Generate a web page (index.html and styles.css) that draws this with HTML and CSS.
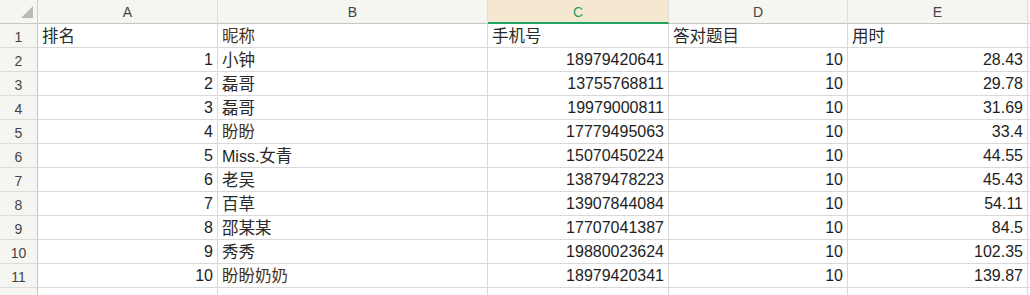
FILE: index.html
```html
<!DOCTYPE html>
<html lang="zh-CN">
<head>
<meta charset="utf-8">
<title>排名</title>
<link rel="stylesheet" href="styles.css">
</head>
<body>
<div class="sheet">
  <div class="corner"><span class="tri"></span></div>
  <div class="colhead">A</div>
  <div class="colhead">B</div>
  <div class="colhead active">C</div>
  <div class="colhead">D</div>
  <div class="colhead">E</div>
  <div class="colhead tail"></div>

  <div class="rowhead">1</div>
  <div class="cell"><span class="cjk">排名</span></div>
  <div class="cell"><span class="cjk warm">昵称</span></div>
  <div class="cell"><span class="cjk">手机号</span></div>
  <div class="cell"><span class="cjk">答对题目</span></div>
  <div class="cell"><span class="cjk">用时</span></div>
  <div class="cell tail"></div>

  <div class="rowhead">2</div>
  <div class="cell num">1</div>
  <div class="cell"><span class="cjk">小钟</span></div>
  <div class="cell num">18979420641</div>
  <div class="cell num">10</div>
  <div class="cell num">28.43</div>
  <div class="cell tail"></div>

  <div class="rowhead">3</div>
  <div class="cell num">2</div>
  <div class="cell"><span class="cjk">磊哥</span></div>
  <div class="cell num">13755768811</div>
  <div class="cell num">10</div>
  <div class="cell num">29.78</div>
  <div class="cell tail"></div>

  <div class="rowhead">4</div>
  <div class="cell num">3</div>
  <div class="cell"><span class="cjk">磊哥</span></div>
  <div class="cell num">19979000811</div>
  <div class="cell num">10</div>
  <div class="cell num">31.69</div>
  <div class="cell tail"></div>

  <div class="rowhead">5</div>
  <div class="cell num">4</div>
  <div class="cell"><span class="cjk warm">盼盼</span></div>
  <div class="cell num">17779495063</div>
  <div class="cell num">10</div>
  <div class="cell num">33.4</div>
  <div class="cell tail"></div>

  <div class="rowhead">6</div>
  <div class="cell num">5</div>
  <div class="cell">Miss.<span class="cjk">女青</span></div>
  <div class="cell num">15070450224</div>
  <div class="cell num">10</div>
  <div class="cell num">44.55</div>
  <div class="cell tail"></div>

  <div class="rowhead">7</div>
  <div class="cell num">6</div>
  <div class="cell"><span class="cjk">老吴</span></div>
  <div class="cell num">13879478223</div>
  <div class="cell num">10</div>
  <div class="cell num">45.43</div>
  <div class="cell tail"></div>

  <div class="rowhead">8</div>
  <div class="cell num">7</div>
  <div class="cell"><span class="cjk">百草</span></div>
  <div class="cell num">13907844084</div>
  <div class="cell num">10</div>
  <div class="cell num">54.11</div>
  <div class="cell tail"></div>

  <div class="rowhead">9</div>
  <div class="cell num">8</div>
  <div class="cell"><span class="cjk">邵某某</span></div>
  <div class="cell num">17707041387</div>
  <div class="cell num">10</div>
  <div class="cell num">84.5</div>
  <div class="cell tail"></div>

  <div class="rowhead">10</div>
  <div class="cell num">9</div>
  <div class="cell"><span class="cjk">秀秀</span></div>
  <div class="cell num">19880023624</div>
  <div class="cell num">10</div>
  <div class="cell num">102.35</div>
  <div class="cell tail"></div>

  <div class="rowhead">11</div>
  <div class="cell num">10</div>
  <div class="cell"><span class="cjk warm">盼盼奶奶</span></div>
  <div class="cell num">18979420341</div>
  <div class="cell num">10</div>
  <div class="cell num">139.87</div>
  <div class="cell tail"></div>

  <div class="rowhead"></div>
  <div class="cell"></div>
  <div class="cell"></div>
  <div class="cell"></div>
  <div class="cell"></div>
  <div class="cell"></div>
  <div class="cell tail"></div>
</div>
</body>
</html>
```

FILE: styles.css
```css
html, body {
  margin: 0;
  padding: 0;
  background: #ffffff;
  overflow: hidden;
}

.sheet {
  display: grid;
  grid-template-columns: 38px 180px 270px 181px 179px 180px 1fr;
  grid-auto-rows: 24px;
  width: 1030px;
  height: 295px;
  overflow: hidden;
  font-family: "Liberation Sans", Arial, sans-serif;
  color: #1e1e1e;
}

.sheet > div {
  box-sizing: border-box;
  border-right: 1px solid #d9d9d9;
  border-bottom: 1px solid #d9d9d9;
  overflow: hidden;
  white-space: nowrap;
}

.corner {
  background: #f5f5f2;
  display: flex;
  align-items: flex-end;
  justify-content: flex-end;
  padding: 0 4px 5px 0;
  border-right-color: #cfcfcc !important;
  border-bottom-color: #c6c6c3 !important;
}

.tri {
  display: block;
  width: 12px;
  height: 12px;
  background: #b9b9b6;
  clip-path: polygon(100% 0, 100% 100%, 0 100%);
}

.colhead {
  background: #f5f5f2;
  display: flex;
  align-items: center;
  justify-content: center;
  padding-top: 1px;
  font-size: 14px;
  color: #444444;
  border-right-color: #dcdcd8 !important;
  border-bottom-color: #c6c6c3 !important;
}

.colhead.active {
  background: #f4e8d0;
  color: #21a366;
  border-bottom: 2px solid #21a366 !important;
  padding-top: 2px;
}

.colhead.tail {
  border-right: none !important;
}

.rowhead {
  background: #f5f5f2;
  display: flex;
  align-items: center;
  justify-content: center;
  padding-top: 2px;
  font-size: 14px;
  color: #444444;
  border-right-color: #c6c6c3 !important;
  border-bottom-color: #dcdcd8 !important;
}

.cell {
  font-size: 16px;
  line-height: 22px;
  padding: 1px 4px 0 4px;
}

.cell.num {
  text-align: right;
}

.cell.tail {
  border-right: none !important;
  padding: 0;
}

.cjk {
  font-family: "Noto Sans CJK SC", "Liberation Sans", sans-serif;
  font-size: 16.5px;
  line-height: 20px;
  color: #2a2a2a;
}

.warm {
  color: #4a3318;
}
```
